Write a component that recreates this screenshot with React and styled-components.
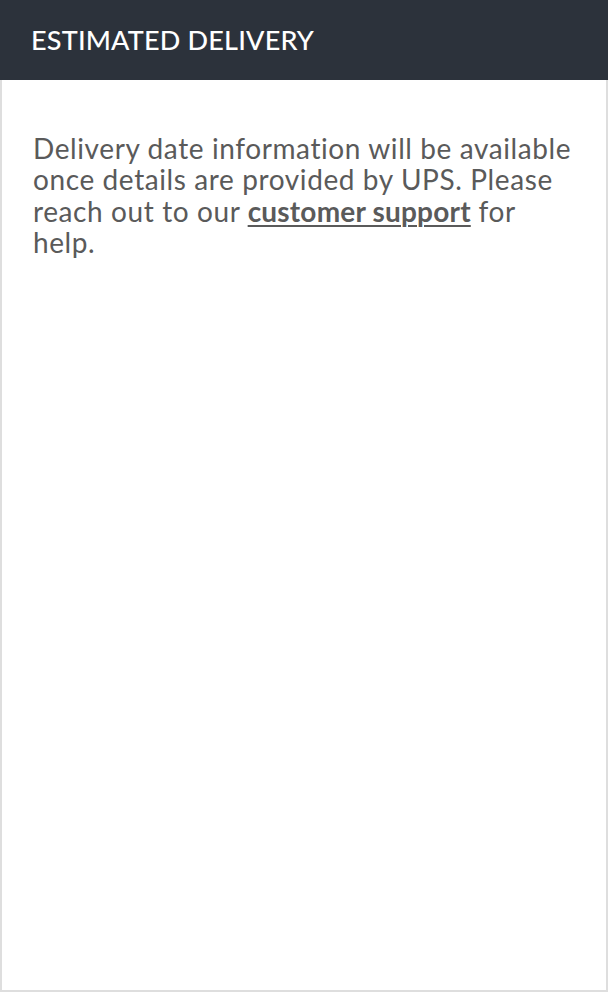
import React from 'react'
import styled, { createGlobalStyle } from 'styled-components'

const GlobalStyle = createGlobalStyle`
    html, body {
        margin: 0;
        padding: 0;
        background: #fff;
    }
    body {
        font-family: Lato, "Open Sans", sans-serif;
    }
`

const Card = styled.div`
    width: 608px;
    height: 992px;
    display: flex;
    flex-direction: column;
    box-sizing: border-box;
`

const Header = styled.div`
    height: 80px;
    flex-shrink: 0;
    background-color: #2c323b;
    display: flex;
    align-items: center;
    padding: 0 31px 2px 31px;
    box-sizing: border-box;
    color: #fff;
    font-size: 27px;
    font-weight: 500;
    letter-spacing: 0.2px;
`

const Body = styled.div`
    flex: 1;
    border: 2px solid #dedede;
    border-top: none;
    padding: 53px 31px 0 31px;
`

const Message = styled.p`
    margin: 0;
    max-width: 540px;
    color: #5a5a5a;
    font-size: 28px;
    line-height: 31.3px;
    letter-spacing: 0.6px;
`

const SupportLink = styled.a`
    color: #5a5a5a;
    font-weight: 700;
    letter-spacing: 0.2px;
    text-decoration: underline;
    text-decoration-thickness: 2px;
    text-underline-offset: 3px;
`

function App() {
    return (
        <Card>
            <GlobalStyle />
            <Header>ESTIMATED DELIVERY</Header>
            <Body>
                <Message>
                    Delivery date information will be available once details are provided by UPS. Please
                    reach out to our <SupportLink href="#">customer support</SupportLink> for help.
                </Message>
            </Body>
        </Card>
    )
}

export default App
